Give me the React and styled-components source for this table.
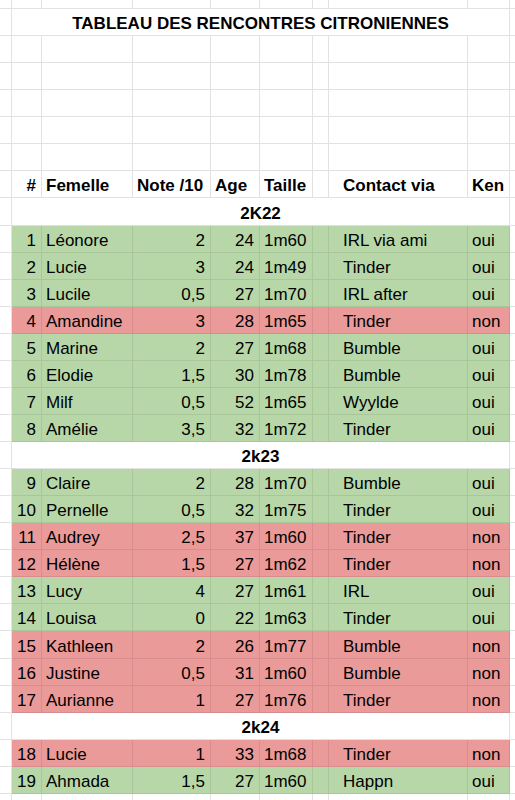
import React from "react";
import styled, { createGlobalStyle, css } from "styled-components";

const GlobalStyle = createGlobalStyle`
  html, body {
    margin: 0;
    padding: 0;
    background: #fff;
    overflow: hidden;
  }
  body {
    font-family: "Liberation Sans", Arial, sans-serif;
  }
`;

const tones = {
  green: "#b7d7a8",
  red: "#ea9a99"
};

const Sheet = styled.div`
  display: grid;
  grid-template-columns: 12px 30px 91px 78px 49px 53px 16px 7px 132px 42px 1fr;
  grid-template-rows: 9px;
  grid-auto-rows: 27.07px;
  width: 515px;
  height: 800px;
  overflow: hidden;
  font-size: 17px;
  color: #000;
`;

const Cell = styled.div`
  box-sizing: border-box;
  display: flex;
  align-items: flex-end;
  justify-content: ${p => (p.$align === "right" ? "flex-end" : p.$align === "center" ? "center" : "flex-start")};
  padding: 0 4px 1px ${p => (p.$indent ? 7 : 4)}px;
  border-right: 1px solid #e2e2e2;
  border-bottom: 1px solid #e2e2e2;
  background: #fff;
  white-space: nowrap;
  overflow: hidden;
  font-weight: ${p => (p.$bold ? 700 : 400)};
  ${p => p.$align === "right" && css`padding-right: 5px;`}
  ${p =>
    p.$tone &&
    css`
      background: ${tones[p.$tone]};
      border-color: rgba(0, 0, 0, 0.08);
    `}
`;

const Merged = styled(Cell)`
  grid-column: 2 / span 9;
  justify-content: center;
  font-weight: 700;
`;

const cols = 11;

const data = [
  { year: "2K22" },
  { n: 1, name: "Léonore", note: "2", age: 24, taille: "1m60", via: "IRL via ami", ken: "oui" },
  { n: 2, name: "Lucie", note: "3", age: 24, taille: "1m49", via: "Tinder", ken: "oui" },
  { n: 3, name: "Lucile", note: "0,5", age: 27, taille: "1m70", via: "IRL after", ken: "oui" },
  { n: 4, name: "Amandine", note: "3", age: 28, taille: "1m65", via: "Tinder", ken: "non" },
  { n: 5, name: "Marine", note: "2", age: 27, taille: "1m68", via: "Bumble", ken: "oui" },
  { n: 6, name: "Elodie", note: "1,5", age: 30, taille: "1m78", via: "Bumble", ken: "oui" },
  { n: 7, name: "Milf", note: "0,5", age: 52, taille: "1m65", via: "Wyylde", ken: "oui" },
  { n: 8, name: "Amélie", note: "3,5", age: 32, taille: "1m72", via: "Tinder", ken: "oui" },
  { year: "2k23" },
  { n: 9, name: "Claire", note: "2", age: 28, taille: "1m70", via: "Bumble", ken: "oui" },
  { n: 10, name: "Pernelle", note: "0,5", age: 32, taille: "1m75", via: "Tinder", ken: "oui" },
  { n: 11, name: "Audrey", note: "2,5", age: 37, taille: "1m60", via: "Tinder", ken: "non" },
  { n: 12, name: "Hélène", note: "1,5", age: 27, taille: "1m62", via: "Tinder", ken: "non" },
  { n: 13, name: "Lucy", note: "4", age: 27, taille: "1m61", via: "IRL", ken: "oui" },
  { n: 14, name: "Louisa", note: "0", age: 22, taille: "1m63", via: "Tinder", ken: "oui" },
  { n: 15, name: "Kathleen", note: "2", age: 26, taille: "1m77", via: "Bumble", ken: "non" },
  { n: 16, name: "Justine", note: "0,5", age: 31, taille: "1m60", via: "Bumble", ken: "non" },
  { n: 17, name: "Aurianne", note: "1", age: 27, taille: "1m76", via: "Tinder", ken: "non" },
  { year: "2k24" },
  { n: 18, name: "Lucie", note: "1", age: 33, taille: "1m68", via: "Tinder", ken: "non" },
  { n: 19, name: "Ahmada", note: "1,5", age: 27, taille: "1m60", via: "Happn", ken: "oui" }
];

const BlankRow = ({ id }) =>
  Array.from({ length: cols }, (_, i) => <Cell key={`${id}-${i}`} />);

const headers = [
  { label: "#", align: "right" },
  { label: "Femelle" },
  { label: "Note /10" },
  { label: "Age" },
  { label: "Taille" },
  { label: "" },
  { label: "" },
  { label: "Contact via", indent: true },
  { label: "Ken" }
];

export default function App() {
  const out = [];
  out.push(<BlankRow key="top" id="top" />);
  out.push(
    <React.Fragment key="title">
      <Cell />
      <Merged>TABLEAU DES RENCONTRES CITRONIENNES</Merged>
      <Cell />
    </React.Fragment>
  );
  for (let i = 0; i < 5; i++) out.push(<BlankRow key={`b${i}`} id={`b${i}`} />);
  out.push(
    <React.Fragment key="head">
      <Cell />
      {headers.map((h, i) => (
        <Cell key={i} $bold $align={h.align} $indent={h.indent}>
          {h.label}
        </Cell>
      ))}
      <Cell />
    </React.Fragment>
  );
  data.forEach((r, idx) => {
    if (r.year) {
      out.push(
        <React.Fragment key={`y${idx}`}>
          <Cell />
          <Merged>{r.year}</Merged>
          <Cell />
        </React.Fragment>
      );
      return;
    }
    const tone = r.ken === "oui" ? "green" : "red";
    out.push(
      <React.Fragment key={`r${idx}`}>
        <Cell />
        <Cell $tone={tone} $align="right">{r.n}</Cell>
        <Cell $tone={tone}>{r.name}</Cell>
        <Cell $tone={tone} $align="right">{r.note}</Cell>
        <Cell $tone={tone} $align="right">{r.age}</Cell>
        <Cell $tone={tone}>{r.taille}</Cell>
        <Cell $tone={tone} />
        <Cell $tone={tone} />
        <Cell $tone={tone} $indent>{r.via}</Cell>
        <Cell $tone={tone}>{r.ken}</Cell>
        <Cell />
      </React.Fragment>
    );
  });
  out.push(<BlankRow key="end" id="end" />);

  return (
    <>
      <GlobalStyle />
      <Sheet>{out}</Sheet>
    </>
  );
}
